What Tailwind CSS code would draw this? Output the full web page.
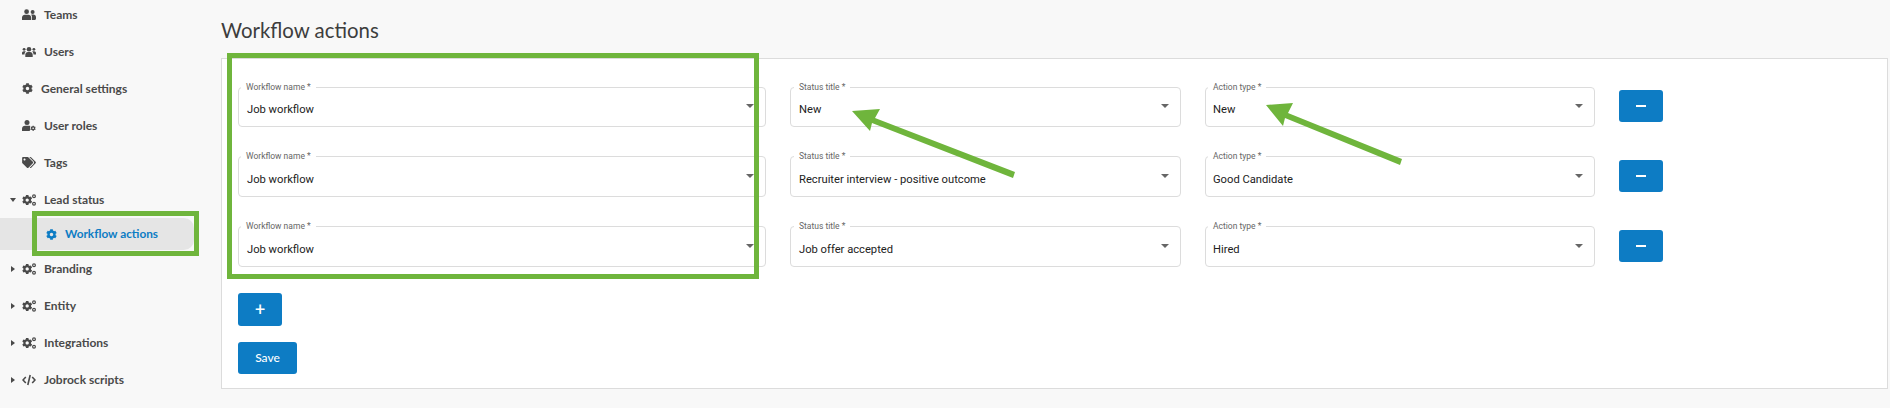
<!DOCTYPE html>
<html lang="en">
<head>
  <meta charset="UTF-8">
  <title>Workflow actions</title>
  <script src="https://cdn.jsdelivr.net/npm/@tailwindcss/browser@4"></script>
</head>
<body class="bg-[#f8f8f8] w-[1890px] h-[408px] overflow-hidden relative font-['Lato','Open_Sans',sans-serif]">

  <!-- shared icons -->
  <svg class="hidden">
    <symbol id="cog" viewBox="0 0 512 512"><path d="M487.4 315.7l-42.6-24.6c4.3-23.2 4.3-47 0-70.2l42.6-24.6c4.9-2.8 7.1-8.6 5.5-14-11.1-35.6-30-67.8-54.7-94.6-3.8-4.1-10-5.1-14.8-2.3L380.8 110c-17.9-15.4-38.5-27.3-60.8-35.1V25.8c0-5.6-3.9-10.5-9.4-11.7-36.7-8.2-74.3-7.8-109.2 0-5.5 1.2-9.4 6.1-9.4 11.7V75c-22.2 7.9-42.8 19.8-60.8 35.1L88.7 85.5c-4.9-2.8-11-1.9-14.8 2.3-24.7 26.7-43.6 58.9-54.7 94.6-1.7 5.4.6 11.2 5.5 14L67.3 221c-4.3 23.2-4.3 47 0 70.2l-42.6 24.6c-4.9 2.8-7.1 8.6-5.5 14 11.1 35.6 30 67.8 54.7 94.6 3.8 4.1 10 5.1 14.8 2.3l42.6-24.6c17.9 15.4 38.5 27.3 60.8 35.1v49.2c0 5.6 3.9 10.5 9.4 11.7 36.7 8.2 74.3 7.8 109.2 0 5.5-1.2 9.4-6.1 9.4-11.7v-49.2c22.2-7.9 42.8-19.8 60.8-35.1l42.6 24.6c4.9 2.8 11 1.9 14.8-2.3 24.7-26.7 43.6-58.9 54.7-94.6 1.5-5.5-.7-11.3-5.6-14.1zM256 336c-44.1 0-80-35.9-80-80s35.9-80 80-80 80 35.9 80 80-35.9 80-80 80z"/></symbol>
    <symbol id="cogs" viewBox="0 0 14 12">
      <use href="#cog" x="0" y="0.800" width="10.400" height="10.400"/>
      <circle cx="12" cy="2.200" r="1.400" fill="none" stroke="currentColor" stroke-width="1.200"/>
      <circle cx="12" cy="9.800" r="1.400" fill="none" stroke="currentColor" stroke-width="1.200"/>
    </symbol>
  </svg>

  <div class="flex">
    <!-- sidebar -->
    <nav class="w-[221px] shrink-0 -mt-[4px] text-[12px] font-bold text-[#4a4a4a]">
      <div class="h-[37px] flex items-center pl-[22px]">
        <svg class="w-[14px] h-[11px] mr-[8px]" viewBox="0 0 14 11" fill="currentColor"><circle cx="4.600" cy="2.700" r="2.400"/><circle cx="10.600" cy="3" r="2"/><path d="M0 11V8.600C0 6.900 1.400 5.800 2.800 5.800h3.600c1.500 0 2.800 1.100 2.800 2.800V11zM10 11V8c0-.8-.3-1.600-.9-2.200.4-.2.800-.3 1.400-.3h.9C12.900 5.500 14 6.600 14 8v1.500c0 .8-.6 1.500-1.400 1.500z"/></svg>
        Teams
      </div>
      <div class="h-[37px] flex items-center pl-[22px]">
        <svg class="w-[14px] h-[11px] mr-[8px]" viewBox="0 0 14 11" fill="currentColor"><circle cx="7" cy="3.200" r="2.300"/><circle cx="2.100" cy="3.300" r="1.400"/><circle cx="11.900" cy="3.300" r="1.400"/><path d="M3.300 11V8.800c0-1.600 1.200-2.800 2.700-2.800h2c1.500 0 2.700 1.200 2.700 2.800V11zM0 8.500V7.200C0 6 .8 5.300 1.800 5.300h1c.4 0 .7.100 1 .3-.7.600-1.300 1.600-1.300 2.900z M14 8.500V7.200c0-1.200-.8-1.900-1.800-1.900h-1c-.4 0-.7.100-1 .3.700.6 1.300 1.600 1.300 2.900z"/></svg>
        Users
      </div>
      <div class="h-[37px] flex items-center pl-[22px]">
        <svg class="w-[11px] h-[11px] mr-[8px]" fill="currentColor"><use href="#cog"/></svg>
        General settings
      </div>
      <div class="h-[37px] flex items-center pl-[22px]">
        <svg class="w-[14px] h-[11px] mr-[8px]" viewBox="0 0 14 11" fill="currentColor"><circle cx="5" cy="2.600" r="2.500"/><path d="M0 11V8.800C0 7.100 1.300 5.800 3 5.800h4c.5 0 .9.100 1.300.3-.2.700-.3 1.300-.2 1.800.1.700.3 1.300.5 1.700L7.500 11z"/><use href="#cog" x="8.400" y="5.500" width="5.500" height="5.500"/></svg>
        User roles
      </div>
      <div class="h-[37px] flex items-center pl-[22px]">
        <svg class="w-[14px] h-[11px] mr-[8px]" viewBox="0 0 640 512" fill="currentColor"><path d="M497.941 225.941L286.059 14.059A48 48 0 0 0 252.118 0H48C21.49 0 0 21.49 0 48v204.118a48 48 0 0 0 14.059 33.941l211.882 211.882c18.744 18.745 49.136 18.746 67.882 0l204.118-204.118c18.745-18.745 18.745-49.137 0-67.882zM112 160c-26.51 0-48-21.49-48-48s21.49-48 48-48 48 21.49 48 48-21.49 48-48 48zm513.941 133.823L421.823 497.941c-18.745 18.745-49.137 18.745-67.882 0l-.36-.36L527.64 323.522c16.999-16.999 26.36-39.6 26.36-63.64s-9.362-46.641-26.36-63.64L331.397 0h48.721a48 48 0 0 1 33.941 14.059l211.882 211.882c18.745 18.745 18.745 49.137 0 67.882z"/></svg>
        Tags
      </div>
      <div class="h-[37px] flex items-center pl-[10px]">
        <span class="w-0 h-0 mr-[6px] border-x-[3.500px] border-x-transparent border-t-[4px] border-t-[#4a4a4a]"></span>
        <svg class="w-[14px] h-[12px] mr-[8px]" fill="currentColor"><use href="#cogs"/></svg>
        Lead status
      </div>
      <div class="h-[32px] w-[194px] flex items-center pl-[46px] bg-[#e5e5e5] rounded-r-[10px] text-[11.800px] text-[#0d7cc4]">
        <svg class="w-[11px] h-[11px] mr-[8px]" fill="currentColor"><use href="#cog"/></svg>
        Workflow actions
      </div>
      <div class="h-[37px] flex items-center pl-[11px]">
        <span class="w-0 h-0 mr-[7px] border-y-[3.500px] border-y-transparent border-l-[4px] border-l-[#4a4a4a]"></span>
        <svg class="w-[14px] h-[12px] mr-[8px]" fill="currentColor"><use href="#cogs"/></svg>
        Branding
      </div>
      <div class="h-[37px] flex items-center pl-[11px]">
        <span class="w-0 h-0 mr-[7px] border-y-[3.500px] border-y-transparent border-l-[4px] border-l-[#4a4a4a]"></span>
        <svg class="w-[14px] h-[12px] mr-[8px]" fill="currentColor"><use href="#cogs"/></svg>
        Entity
      </div>
      <div class="h-[37px] flex items-center pl-[11px]">
        <span class="w-0 h-0 mr-[7px] border-y-[3.500px] border-y-transparent border-l-[4px] border-l-[#4a4a4a]"></span>
        <svg class="w-[14px] h-[12px] mr-[8px]" fill="currentColor"><use href="#cogs"/></svg>
        Integrations
      </div>
      <div class="h-[37px] flex items-center pl-[11px]">
        <span class="w-0 h-0 mr-[7px] border-y-[3.500px] border-y-transparent border-l-[4px] border-l-[#4a4a4a]"></span>
        <svg class="w-[14px] h-[12px] mr-[8px]" viewBox="0 0 14 12" fill="none" stroke="currentColor" stroke-width="1.600"><path d="M3.800 3 1 6l2.800 3M10.200 3 13 6l-2.800 3M8.200 1 5.800 11"/></svg>
        Jobrock scripts
      </div>
    </nav>

    <!-- main -->
    <main class="w-[1667px]">
      <h1 class="h-[58px] pt-[18px] text-[20.400px] leading-[24px] text-[#3d3d3d]">Workflow actions</h1>
      <div class="h-[331px] bg-white border border-[#dcdcdc] pl-[16px] pt-[28px] font-['Roboto',sans-serif]">

        <div class="flex items-start h-[68px]">
          <div class="relative w-[528px] h-[40px] border border-[#dcdcdc] rounded-[4px] flex items-center pl-[8px] pr-[11px] pt-[6px] text-[11.200px] text-[#222] justify-between">
            <span class="absolute -top-[7px] left-[2px] px-[5px] bg-white text-[8.500px] leading-[12px] text-[#666]">Workflow name *</span>
            Job workflow
            <span class="w-0 h-0 -mt-[9px] border-x-[4px] border-x-transparent border-t-[4px] border-t-[#666]"></span>
          </div>
          <div class="relative w-[391px] h-[40px] ml-[24px] border border-[#dcdcdc] rounded-[4px] flex items-center pl-[8px] pr-[11px] pt-[6px] text-[11.200px] text-[#222] justify-between">
            <span class="absolute -top-[7px] left-[3px] px-[5px] bg-white text-[8.500px] leading-[12px] text-[#666]">Status title *</span>
            New
            <span class="w-0 h-0 -mt-[9px] border-x-[4px] border-x-transparent border-t-[4px] border-t-[#666]"></span>
          </div>
          <div class="relative w-[390px] h-[40px] ml-[24px] border border-[#dcdcdc] rounded-[4px] flex items-center pl-[7px] pr-[11px] pt-[6px] text-[11.200px] text-[#222] justify-between">
            <span class="absolute -top-[7px] left-[2px] px-[5px] bg-white text-[8.500px] leading-[12px] text-[#666]">Action type *</span>
            New
            <span class="w-0 h-0 -mt-[9px] border-x-[4px] border-x-transparent border-t-[4px] border-t-[#666]"></span>
          </div>
          <button class="w-[44px] h-[32px] ml-[24px] mt-[3px] bg-[#0d7cc4] rounded-[3px] flex items-center justify-center"><span class="w-[10px] h-[2px] bg-white"></span></button>
        </div>

        <div class="flex items-start h-[70px] mt-[1px]">
          <div class="relative w-[528px] h-[41px] border border-[#dcdcdc] rounded-[4px] flex items-center pl-[8px] pr-[11px] pt-[8px] text-[11.200px] text-[#222] justify-between">
            <span class="absolute -top-[7px] left-[2px] px-[5px] bg-white text-[8.500px] leading-[12px] text-[#666]">Workflow name *</span>
            Job workflow
            <span class="w-0 h-0 -mt-[10px] border-x-[4px] border-x-transparent border-t-[4px] border-t-[#666]"></span>
          </div>
          <div class="relative w-[391px] h-[41px] ml-[24px] border border-[#dcdcdc] rounded-[4px] flex items-center pl-[8px] pr-[11px] pt-[8px] text-[11.200px] text-[#222] justify-between">
            <span class="absolute -top-[7px] left-[3px] px-[5px] bg-white text-[8.500px] leading-[12px] text-[#666]">Status title *</span>
            Recruiter interview - positive outcome
            <span class="w-0 h-0 -mt-[10px] border-x-[4px] border-x-transparent border-t-[4px] border-t-[#666]"></span>
          </div>
          <div class="relative w-[390px] h-[41px] ml-[24px] border border-[#dcdcdc] rounded-[4px] flex items-center pl-[7px] pr-[11px] pt-[8px] text-[11.200px] text-[#222] justify-between">
            <span class="absolute -top-[7px] left-[2px] px-[5px] bg-white text-[8.500px] leading-[12px] text-[#666]">Action type *</span>
            Good Candidate
            <span class="w-0 h-0 -mt-[10px] border-x-[4px] border-x-transparent border-t-[4px] border-t-[#666]"></span>
          </div>
          <button class="w-[44px] h-[32px] ml-[24px] mt-[4px] bg-[#0d7cc4] rounded-[3px] flex items-center justify-center"><span class="w-[10px] h-[2px] bg-white"></span></button>
        </div>

        <div class="flex items-start h-[41px]">
          <div class="relative w-[528px] h-[41px] border border-[#dcdcdc] rounded-[4px] flex items-center pl-[8px] pr-[11px] pt-[8px] text-[11.200px] text-[#222] justify-between">
            <span class="absolute -top-[7px] left-[2px] px-[5px] bg-white text-[8.500px] leading-[12px] text-[#666]">Workflow name *</span>
            Job workflow
            <span class="w-0 h-0 -mt-[10px] border-x-[4px] border-x-transparent border-t-[4px] border-t-[#666]"></span>
          </div>
          <div class="relative w-[391px] h-[41px] ml-[24px] border border-[#dcdcdc] rounded-[4px] flex items-center pl-[8px] pr-[11px] pt-[8px] text-[11.200px] text-[#222] justify-between">
            <span class="absolute -top-[7px] left-[3px] px-[5px] bg-white text-[8.500px] leading-[12px] text-[#666]">Status title *</span>
            Job offer accepted
            <span class="w-0 h-0 -mt-[10px] border-x-[4px] border-x-transparent border-t-[4px] border-t-[#666]"></span>
          </div>
          <div class="relative w-[390px] h-[41px] ml-[24px] border border-[#dcdcdc] rounded-[4px] flex items-center pl-[7px] pr-[11px] pt-[8px] text-[11.200px] text-[#222] justify-between">
            <span class="absolute -top-[7px] left-[2px] px-[5px] bg-white text-[8.500px] leading-[12px] text-[#666]">Action type *</span>
            Hired
            <span class="w-0 h-0 -mt-[10px] border-x-[4px] border-x-transparent border-t-[4px] border-t-[#666]"></span>
          </div>
          <button class="w-[44px] h-[32px] ml-[24px] mt-[4px] bg-[#0d7cc4] rounded-[3px] flex items-center justify-center"><span class="w-[10px] h-[2px] bg-white"></span></button>
        </div>

        <button class="block w-[44px] h-[33px] mt-[26px] bg-[#0d7cc4] rounded-[3px] text-white text-[18px] leading-none">+</button>
        <button class="block w-[59px] h-[32px] mt-[16px] bg-[#0d7cc4] rounded-[3px] text-white text-[12px] font-medium font-['Lato',sans-serif]">Save</button>
      </div>
    </main>
  </div>

  <!-- annotations drawn over the screenshot -->
  <div class="absolute left-[227px] top-[53px] w-[532px] h-[226px] border-[5px] border-[#6fb53c]"></div>
  <div class="absolute left-[32px] top-[211px] w-[167px] h-[45px] border-[5px] border-[#6fb53c]"></div>
  <svg class="absolute left-0 top-0 w-[1890px] h-[408px] pointer-events-none" viewBox="0 0 1890 408" fill="#6fb53c" stroke="none">
    <path d="M852 111 880 109 875 118 1015 172 1013 178 872 123 870 131z"/>
    <path d="M1266 105 1293 103 1288 113 1402 159 1400 165 1285 118 1283 126z"/>
  </svg>
</body>
</html>
